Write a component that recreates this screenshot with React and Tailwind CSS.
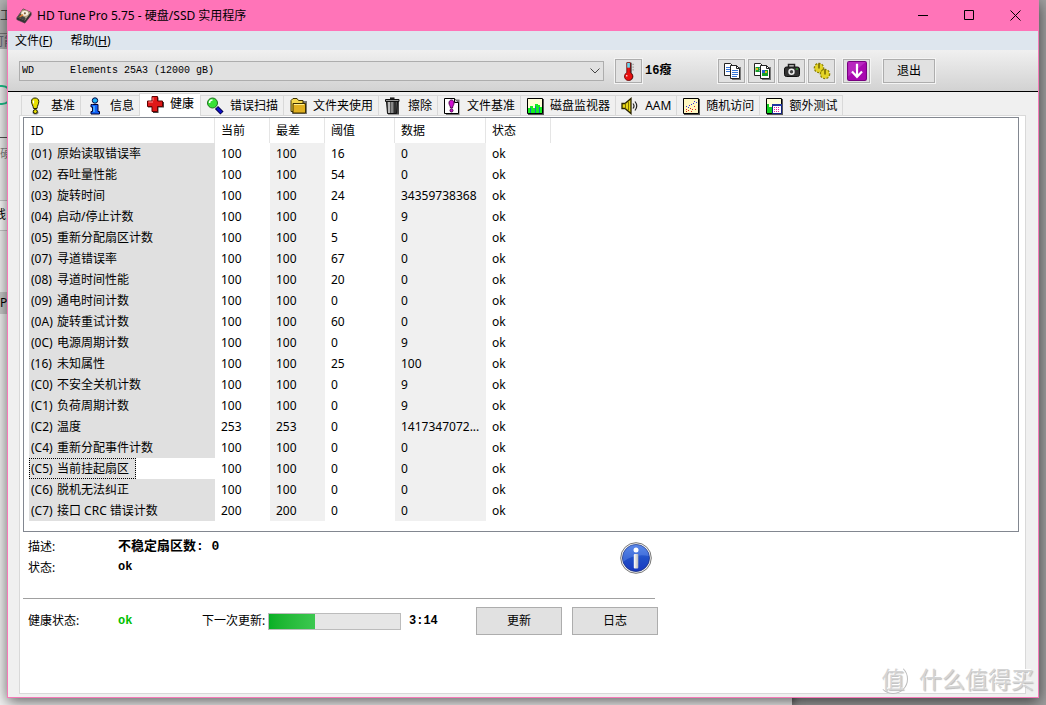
import { useState } from 'react';
import clsx from 'clsx';

const UI = "font-['Noto_Sans','Noto_Sans_CJK_SC',sans-serif]";
const FIXED = "font-['Liberation_Mono','Noto_Sans_CJK_SC',monospace]";

const attributes = [
    ['01', '原始读取错误率', 100, 100, 16, '0'],
    ['02', '吞吐量性能', 100, 100, 54, '0'],
    ['03', '旋转时间', 100, 100, 24, '34359738368'],
    ['04', '启动/停止计数', 100, 100, 0, '9'],
    ['05', '重新分配扇区计数', 100, 100, 5, '0'],
    ['07', '寻道错误率', 100, 100, 67, '0'],
    ['08', '寻道时间性能', 100, 100, 20, '0'],
    ['09', '通电时间计数', 100, 100, 0, '0'],
    ['0A', '旋转重试计数', 100, 100, 60, '0'],
    ['0C', '电源周期计数', 100, 100, 0, '9'],
    ['16', '未知属性', 100, 100, 25, '100'],
    ['C0', '不安全关机计数', 100, 100, 0, '9'],
    ['C1', '负荷周期计数', 100, 100, 0, '9'],
    ['C2', '温度', 253, 253, 0, '1417347072...'],
    ['C4', '重新分配事件计数', 100, 100, 0, '0'],
    ['C5', '当前挂起扇区', 100, 100, 0, '0'],
    ['C6', '脱机无法纠正', 100, 100, 0, '0'],
    ['C7', '接口 CRC 错误计数', 200, 200, 0, '0'],
];

const Svg = ({ children, size = 18 }) => (
    <svg width={size} height={size} viewBox="0 0 18 18" className="shrink-0" aria-hidden="true">
        {children}
    </svg>
);

/* Tab icons */
const BenchmarkIcon = () => (
    <Svg>
        <ellipse cx="8.5" cy="15.5" rx="3" ry="2" fill="#888" />
        <path d="M4.5 4.5C4.5 2 6 1 8 1s3.8 1 3.8 3.5c0 2.500-1.500 4-1.800 7h-3.500C6.200 8.500 4.500 7 4.500 4.500z" fill="#e8e000" stroke="#1a1a00" />
        <path d="M6.500 3.500v3" stroke="#fff" strokeWidth="1.200" />
        <circle cx="8.300" cy="14.500" r="2" fill="#e8e000" stroke="#1a1a00" />
    </Svg>
);

const InfoTabIcon = () => (
    <Svg>
        <path d="M6.500 7.500h5.500v7h1.500v2.500H5v-2.500h1.500V10H5V7.500z" fill="#1060f8" stroke="#000030" />
        <path d="M8 9v6" stroke="#50b8ff" strokeWidth="1.500" />
        <circle cx="9" cy="3.500" r="2.700" fill="#20b0f8" stroke="#000040" />
    </Svg>
);

const HealthIcon = () => (
    <Svg>
        <path d="M7 2.500h5.500V7H18v5.500h-5.500V18H7v-5.500H2V7h5z" fill="#444" />
        <path d="M6 1.500h5.500V6H16.500v5.500h-5V16.500H6v-5H1.500V6H6z" fill="#e01818" stroke="#600000" />
        <path d="M7 5.500V2.500M2.500 7h4.500" stroke="#ff9090" />
    </Svg>
);

const ScanIcon = () => (
    <Svg>
        <path d="M10.500 10.500l5.500 5.500" stroke="#000040" strokeWidth="4.500" />
        <path d="M11 11l4.500 4.500" stroke="#1010c8" strokeWidth="2.500" />
        <circle cx="6.500" cy="6" r="5" fill="#38e038" stroke="#207020" />
        <path d="M3.500 6a3 3 0 0 1 3-3" stroke="#fff" strokeWidth="1.500" fill="none" />
    </Svg>
);

const FolderIcon = () => (
    <Svg>
        <path d="M3 4h15v13H3z" fill="#777" />
        <path d="M2 3.500L4 1.500h4l1.500 2H14v11H2z" fill="#f4d850" stroke="#3c3000" />
        <path d="M4 6.500h12.500v9.500H4z" fill="#e0b020" stroke="#3c3000" />
        <path d="M5 7.500h10" stroke="#fff090" />
    </Svg>
);

const TrashIcon = () => (
    <Svg>
        <path d="M3 5h12v12.500H4z" fill="#444" />
        <path d="M2.500 4.500h11l-1 12h-9z" fill="#555" stroke="#111" />
        <path d="M5 5v11" stroke="#ddd" strokeWidth="1.500" />
        <path d="M8 5v11" stroke="#999" strokeWidth="1.500" />
        <path d="M11 5v11" stroke="#222" strokeWidth="1.500" />
        <path d="M1.500 2.500h13.500v2H1.500z" fill="#999" stroke="#111" />
        <path d="M6 1.200h4.500" stroke="#111" strokeWidth="1.500" />
    </Svg>
);

const FileBenchIcon = () => (
    <Svg>
        <path d="M3 2.500h13.500V18H3z" fill="#777" />
        <path d="M1.500 1.500h10l4 4v11h-14z" fill="#fff" stroke="#000" />
        <path d="M11.500 1.500v4h4" fill="#ccc" stroke="#000" />
        <path d="M6 6c0-4 5-4 5 0 0 2-1.500 3-1.500 5h-2C7.500 9 6 8 6 6z" fill="#d010d0" stroke="#500050" />
        <circle cx="8.500" cy="13.500" r="1.500" fill="#d010d0" stroke="#500050" />
    </Svg>
);

const MonitorIcon = () => (
    <Svg>
        <path d="M2 2h16v16H2z" fill="#555" />
        <path d="M1.500 1.500h15v15h-15z" fill="#ffffd8" stroke="#000" />
        <path d="M2 11h2v5H2zM4 9h3v7H4zM7 11h2v5H7zM9 7h3v9H9zM12 8h2v8h-2zM14 10h2v6h-2z" fill="#10f020" />
        <path d="M4.500 11v5M9.500 9v7M13.500 10v6" stroke="#1870b0" />
    </Svg>
);

const SpeakerIcon = () => (
    <Svg>
        <path d="M1 6.500h3l6-5v15l-6-5H1z" fill="#e8d818" stroke="#2a2400" strokeWidth="1.300" />
        <path d="M4.500 6.500v5M7.500 4.500v9" stroke="#807000" />
        <path d="M12 6.500q2 2.500 0 5M14 4.500q3.500 4.500 0 9" fill="none" stroke="#222" strokeWidth="1.200" />
    </Svg>
);

const RandomIcon = () => (
    <Svg>
        <path d="M2 2h16v16H2z" fill="#555" />
        <path d="M1.500 1.500h15v15h-15z" fill="#fff8c0" stroke="#000" />
        <path d="M4 12h1v1H4zM6 13h1v1H6zM8 11h1v1H8zM10 12h1v1h-1zM12 9h1v1h-1zM13 12h1v1h-1zM4 14h1v1H4zM9 14h1v1H9z" fill="#e02020" />
        <path d="M4 9h1v1H4zM7 8h1v1H7zM9 7h1v1H9zM11 6h1v1h-1zM12 4h1v1h-1zM14 5h1v1h-1zM6 10h1v1H6z" fill="#3030e0" />
    </Svg>
);

const ExtraIcon = () => (
    <Svg>
        <path d="M2 2h16v16H2z" fill="#555" />
        <path d="M1.500 1.500h15v15h-15z" fill="#ffffd8" stroke="#000" />
        <path d="M2 7h2v9H2zM4 10h3v6H4z" fill="#10d020" />
        <path d="M7.500 7.500h9v9h-9z" fill="#fff" stroke="#102080" />
        <path d="M7 7h10v2H7z" fill="#2038a0" />
        <path d="M9 10h1v1H9zM11 10h1v1h-1zM13 10h1v1h-1zM9 12h1v1H9zM11 12h1v1h-1zM13 12h1v1h-1zM9 14h1v1H9zM11 14h1v1h-1zM13 14h1v1h-1z" fill="#e020a0" />
    </Svg>
);

/* Toolbar icons */
const ThermometerIcon = () => (
    <Svg size={20}>
        <path d="M8 1.500h3.500v9.500a3.700 3.700 0 1 1-4.500 0z" fill="#555" />
        <path d="M7 1.500h3.200v9a3.700 3.700 0 1 1-3.200 0z" fill="#e81010" stroke="#600" strokeWidth=".7" />
        <path d="M7.400 1.800h2.400v4.200H7.400z" fill="#60d8f0" />
        <path d="M7 12.500v1.500" stroke="#fff" />
        <path d="M12 3h1.500M12 5.500h1.500M12 8h1.500" stroke="#888" strokeWidth=".7" />
    </Svg>
);

const CopyIcon = ({ image }) => (
    <Svg>
        <path d="M1.500 1.500h6l2 2v10h-8z" fill="#fff" stroke="#222" />
        <path d="M3 5.500h4M3 7.500h4M3 9.500h4" stroke="#3878d8" />
        <path d="M9 5h9v13H9z" fill="#777" />
        <path d="M7.500 3.500h6l3 3v10h-9z" fill="#fff" stroke="#222" />
        <path d="M13.500 3.500v3h3" fill="none" stroke="#222" />
        {image ? (
            <>
                <path d="M2.500 5h4v5h-4zM9 8h6v6H9z" fill="#18a028" />
                <path d="M9 8h3v3H9z" fill="#2860d0" />
                <path d="M12 9h2v2h-2zM3 6h2v2H3z" fill="#e8b820" />
            </>
        ) : (
            <path d="M9 8.500h6M9 10.500h6M9 12.500h6M9 14.500h5" stroke="#3878d8" />
        )}
    </Svg>
);

const CameraIcon = () => (
    <Svg>
        <path d="M5.500 5V2.500h6V5" fill="none" stroke="#222" strokeWidth="1.500" />
        <rect x="1.500" y="5" width="15" height="9.500" rx="2" fill="#333" stroke="#111" />
        <circle cx="8.500" cy="9.700" r="3.200" fill="#eee" />
        <circle cx="8.500" cy="9.700" r="1.700" fill="#444" />
        <path d="M13 7h2" stroke="#3c3" />
    </Svg>
);

const GearsIcon = () => (
    <Svg>
        <circle cx="6" cy="6" r="4.300" fill="#d8c818" stroke="#8c8000" strokeWidth="2" strokeDasharray="2 1.200" />
        <circle cx="6" cy="6" r="3.900" fill="#e4d428" />
        <path d="M6 1.500v5" stroke="#706400" strokeWidth="1.500" />
        <circle cx="12" cy="12" r="4.300" fill="#d8c818" stroke="#8c8000" strokeWidth="2" strokeDasharray="2 1.200" />
        <circle cx="12" cy="12" r="3.900" fill="#e4d428" />
        <path d="M12 7.500v5" stroke="#706400" strokeWidth="1.500" />
    </Svg>
);

const DownloadIcon = () => (
    <Svg size={20}>
        <rect x=".5" y=".5" width="17" height="17" rx="1.500" fill="#a808b0" stroke="#780080" />
        <path d="M1 1h16L1 14z" fill="#d058d8" opacity=".4" />
        <path d="M9 2.500v11M4.500 9.500L9 14.200l4.500-4.700" fill="none" stroke="#fff" strokeWidth="2" />
    </Svg>
);

const DiskIcon = () => (
    <Svg size={16}>
        <path d="M1 11L8 1l9 4v3l-7 9-9-4z" fill="#333" stroke="#333" strokeWidth=".7" />
        <path d="M1.500 10.500L8 1.500l8.500 3.500-6.500 9z" fill="#b8a888" />
        <path d="M1.500 10.500L5 5.500l6 6-1.500 2.500z" fill="#444" />
        <ellipse cx="10" cy="6" rx="4.500" ry="3.500" fill="#f8f0e0" stroke="#907850" strokeWidth=".7" />
        <circle cx="10" cy="6" r="1.200" fill="#806040" />
        <path d="M4 10l4-2.500" stroke="#e08030" strokeWidth="1.500" />
    </Svg>
);

const InfoBadge = () => (
    <svg width="32" height="32" viewBox="0 0 32 32" aria-label="信息">
        <defs>
            <linearGradient id="badge" x1="0" y1="0" x2="0" y2="1">
                <stop offset="0" stopColor="#4878e0" />
                <stop offset=".5" stopColor="#2050c8" />
                <stop offset="1" stopColor="#1838c0" />
            </linearGradient>
            <linearGradient id="stem" x1="0" y1="0" x2="1" y2="0">
                <stop offset="0" stopColor="#fff" />
                <stop offset="1" stopColor="#bbb" />
            </linearGradient>
        </defs>
        <circle cx="16" cy="16" r="15.300" fill="#f4f4f4" stroke="#777" />
        <circle cx="16" cy="16" r="13.500" fill="url(#badge)" stroke="#183080" strokeWidth=".8" />
        <path d="M3 17a13 13 0 0 1 26-3Q14 11 3 20z" fill="#88b0ff" opacity=".3" />
        <circle cx="16" cy="8" r="2.500" fill="#fff" />
        <rect x="13.800" y="12" width="4.500" height="14.500" rx="1" fill="url(#stem)" />
    </svg>
);

const tabs = [
    { id: 'benchmark', label: '基准', icon: BenchmarkIcon },
    { id: 'info', label: '信息', icon: InfoTabIcon },
    { id: 'health', label: '健康', icon: HealthIcon },
    { id: 'scan', label: '错误扫描', icon: ScanIcon },
    { id: 'folder', label: '文件夹使用', icon: FolderIcon },
    { id: 'erase', label: '擦除', icon: TrashIcon },
    { id: 'file', label: '文件基准', icon: FileBenchIcon },
    { id: 'monitor', label: '磁盘监视器', icon: MonitorIcon },
    { id: 'aam', label: 'AAM', icon: SpeakerIcon },
    { id: 'random', label: '随机访问', icon: RandomIcon },
    { id: 'extra', label: '额外测试', icon: ExtraIcon },
];

const columns = ['ID', '当前', '最差', '阈值', '数据', '状态'];

function ToolButton({ label, className, children }) {
    return (
        <button
            aria-label={label}
            className={clsx('flex h-6 w-[27px] shrink-0 items-center justify-center border border-[#adadad] bg-[#e1e1e1] outline outline-[#f4f4f4]', className)}
        >
            {children}
        </button>
    );
}

function TitleBar() {
    return (
        <header className="flex h-[31px] shrink-0 items-center bg-[#ff74b8] pl-2">
            <DiskIcon />
            <h1 className="ml-[5px] flex-1 text-[12px]">HD Tune Pro 5.75 - 硬盘/SSD 实用程序</h1>
            <button aria-label="最小化" className="flex h-full w-[46px] items-center justify-center">
                <svg width="11" height="11" stroke="#000"><path d="M0 5.500h10" /></svg>
            </button>
            <button aria-label="最大化" className="flex h-full w-[46px] items-center justify-center">
                <svg width="11" height="11" stroke="#000" fill="none"><path d="M.5.5h9v9h-9z" /></svg>
            </button>
            <button aria-label="关闭" className="flex h-full w-[46px] items-center justify-center">
                <svg width="11" height="11" stroke="#000"><path d="M.5.500l10 10M10.500.500l-10 10" /></svg>
            </button>
        </header>
    );
}

function MenuBar() {
    return (
        <nav className="flex h-[19px] shrink-0 items-center gap-[18px] bg-[#dee6ee] px-[7px]">
            <button>文件(<u>F</u>)</button>
            <button>帮助(<u>H</u>)</button>
        </nav>
    );
}

function Toolbar() {
    return (
        <div className="flex h-[42px] shrink-0 items-center border-b border-black bg-linear-to-b from-[#f0f0f0] to-[#d2d2d2] pr-[103px] pl-[11px]">
            <div className="relative min-w-0 flex-1">
                <select
                    aria-label="驱动器"
                    className={clsx('block h-5 w-full appearance-none border border-[#adadad] bg-[#e1e1e1] pl-[2px] text-[10px]', FIXED)}
                >
                    <option>{'WD\u00a0\u00a0\u00a0\u00a0\u00a0\u00a0Elements 25A3 (12000 gB)'}</option>
                </select>
                <svg width="10" height="6" className="pointer-events-none absolute top-[7px] right-1" fill="none" stroke="#444">
                    <path d="M.5.500L5 5 9.500.500" />
                </svg>
            </div>
            <ToolButton label="温度" className="ml-[11px]"><ThermometerIcon /></ToolButton>
            <span className={clsx('ml-[3px] w-[73px] text-[12px] font-bold', FIXED)}>16癈</span>
            <div className="flex gap-[3px]">
                <ToolButton label="复制文本"><CopyIcon /></ToolButton>
                <ToolButton label="复制图像"><CopyIcon image /></ToolButton>
                <ToolButton label="截图"><CameraIcon /></ToolButton>
                <ToolButton label="选项"><GearsIcon /></ToolButton>
            </div>
            <ToolButton label="保存" className="ml-2"><DownloadIcon /></ToolButton>
            <button className="ml-[13px] h-6 w-[52px] shrink-0 border border-[#adadad] bg-[#e1e1e1] outline outline-[#f4f4f4]">退出</button>
        </div>
    );
}

function TabStrip({ active, onSelect }) {
    return (
        <div role="tablist" className="flex h-[23px] shrink-0 items-end pl-[2px]">
            {tabs.map(({ id, label, icon: Icon }) => (
                <button
                    key={id}
                    role="tab"
                    aria-selected={id === active}
                    onClick={() => onSelect(id)}
                    className={clsx(
                        'flex items-center border-t border-l border-[#d9d9d9] whitespace-nowrap last:border-r',
                        id === active ? 'z-10 -mb-px h-[23px] gap-[6px] bg-white pr-[6px] pb-[3px] pl-[6px]' : 'h-5 gap-[6px] bg-[#f0f0f0] pr-[5px] pl-[5px]'
                    )}
                >
                    <Icon />
                    {label}
                </button>
            ))}
        </div>
    );
}

function AttributeTable({ selected, onSelect }) {
    return (
        <div className="mr-[6px] ml-[3px] border border-[#828790] pb-[10px] pl-[5px]">
            <table className="w-[522px] table-fixed border-separate border-spacing-0 text-left">
                <colgroup>
                    <col className="w-[186px]" />
                    <col className="w-[55px]" />
                    <col className="w-[55px] bg-[#f0f0f0]" />
                    <col className="w-[70px]" />
                    <col className="w-[91px] bg-[#f0f0f0]" />
                    <col className="w-[65px]" />
                </colgroup>
                <thead>
                    <tr className="h-[25px] bg-white">
                        {columns.map((name) => (
                            <th key={name} className="border-r border-[#e5e5e5] pl-[6px] font-normal first:pl-[2px]">{name}</th>
                        ))}
                    </tr>
                </thead>
                <tbody>
                    {attributes.map(([id, name, current, worst, threshold, data]) => {
                        const title = (
                            <>
                                <span className="inline-block w-[26px]">({id})</span>
                                {name}
                            </>
                        );
                        return (
                            <tr key={id} onClick={() => onSelect(id)} className="h-[21px] leading-5">
                                <td className={id === selected ? 'bg-white' : 'bg-[#e0e0e0] pl-[2px]'}>
                                    {id === selected ? (
                                        <span className="inline-block h-[21px] border border-dotted border-black bg-[#e0e0e0] pr-[6px] pl-px align-top">{title}</span>
                                    ) : (
                                        title
                                    )}
                                </td>
                                <td className="pl-[6px]">{current}</td>
                                <td className="pl-[6px]">{worst}</td>
                                <td className="pl-[6px]">{threshold}</td>
                                <td className="pl-[6px]">{data}</td>
                                <td className="pl-[6px]">ok</td>
                            </tr>
                        );
                    })}
                </tbody>
            </table>
        </div>
    );
}

function Details() {
    return (
        <div className="ml-[3px] flex h-[67px] w-[632px] shrink-0 items-start justify-between border-b border-[#a0a0a0] pt-1 pr-[3px] pl-[5px]">
            <dl className="grid grid-cols-[90px_auto] leading-[21px]">
                <dt>描述:</dt>
                <dd className={clsx('text-[13px] font-bold', FIXED)}>不稳定扇区数: 0</dd>
                <dt>状态:</dt>
                <dd className={clsx('text-[12px] font-bold', FIXED)}>ok</dd>
            </dl>
            <div className="pt-[6px]">
                <InfoBadge />
            </div>
        </div>
    );
}

function StatusRow({ progress }) {
    return (
        <div className="mt-2 flex h-7 shrink-0 items-center pl-2">
            <span className="w-[90px]">健康状态:</span>
            <span className={clsx('w-[84px] text-[12px] font-bold text-[#00c000]', FIXED)}>ok</span>
            <span id="next-update" className="w-[66px] whitespace-nowrap">下一次更新:</span>
            <div
                role="progressbar"
                aria-labelledby="next-update"
                aria-valuenow={progress}
                className="h-[17px] w-[133px] border border-[#bcbcbc] bg-[#e6e6e6]"
            >
                <div className="h-full bg-linear-to-r from-[#06b025] to-[#3cc850]" style={{ width: `${progress}%` }} />
            </div>
            <span className={clsx('ml-2 w-[67px] text-[12px] font-bold', FIXED)}>3:14</span>
            <div className="flex gap-[10px]">
                <button className="h-7 w-[86px] border border-[#adadad] bg-[#e1e1e1]">更新</button>
                <button className="h-7 w-[86px] border border-[#adadad] bg-[#e1e1e1]">日志</button>
            </div>
        </div>
    );
}

/* Edge of the window that lies behind this one */
function BackWindow() {
    return (
        <div className="absolute inset-y-0 left-0 w-[792px] overflow-hidden shadow-[2px_0_8px_rgba(0,0,0,0.5)]" aria-hidden="true">
            <div className="h-[49px] bg-[#b4b4b4] pt-2 text-[#444]">
                <div className="h-[26px] border-b border-[#777]">工</div>
                <div className="-ml-2 text-[#667]">可能</div>
            </div>
            <div className="h-full bg-[#f4f4f4] pt-9">
                <div className="-ml-4 h-5 w-7 rounded-[10px] border-2 border-[#1fc48e]" />
                <div className="mt-8 h-[58px] border-t border-[#555] pt-2 text-[#888]">硬</div>
                <div className="mt-[5px] h-[31px] border-y border-[#ccc] bg-white pt-[6px]">
                    <span className="-ml-[6px]">线</span>
                </div>
                <div className="mt-[61px] h-[22px] bg-[#ccc] pt-[3px]">Pr</div>
            </div>
        </div>
    );
}

function Watermark() {
    return (
        <div className="pointer-events-none absolute right-3 bottom-[10px] z-20 flex items-center gap-[11px] text-[23px] leading-[32px] text-[#d4d4d4] [text-shadow:-1px_-1px_0_#fff,1px_1px_1px_#bbb]">
            <span className="flex size-[30px] items-center justify-center rounded-full border border-white border-r-[#bbb] border-b-[#bbb]">值</span>
            <span>什么值得买</span>
        </div>
    );
}

export default function App() {
    const [tab, setTab] = useState('health');
    const [selected, setSelected] = useState('C5');

    return (
        <div className={clsx('relative flex min-h-screen flex-col overflow-hidden bg-[#a0a0a0] px-[7px] pb-[7px] text-[12px] leading-4 text-black', UI)}>
            <BackWindow />
            <main className="relative flex flex-1 flex-col border border-t-0 border-[#f57ab8] bg-[#f0f0f0] shadow-[0_4px_14px_rgba(0,0,0,0.6)]">
                <TitleBar />
                <MenuBar />
                <Toolbar />
                <div className="flex flex-1 flex-col pr-3 pb-[3px] pl-[11px]">
                    <TabStrip active={tab} onSelect={setTab} />
                    <section role="tabpanel" className="flex flex-1 flex-col border border-[#d9d9d9] bg-white pt-px">
                        <AttributeTable selected={selected} onSelect={setSelected} />
                        <Details />
                        <StatusRow progress={35} />
                    </section>
                </div>
            </main>
            <Watermark />
        </div>
    );
}
